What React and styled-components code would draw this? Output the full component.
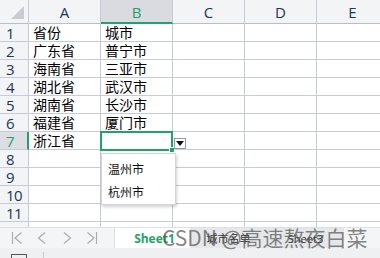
import React from 'react';
import styled, { createGlobalStyle, css } from 'styled-components';

const cols = ['A', 'B', 'C', 'D', 'E'];
const rows = [
  ['省份', '城市'],
  ['广东省', '普宁市'],
  ['海南省', '三亚市'],
  ['湖北省', '武汉市'],
  ['湖南省', '长沙市'],
  ['福建省', '厦门市'],
  ['浙江省', ''],
  ['', ''],
  ['', ''],
  ['', ''],
  ['', ''],
  ['', ''],
];

const GREEN = '#21a366';
const GRID = '#c5cbdc';

const GlobalStyle = createGlobalStyle`
  html, body {
    margin: 0;
    padding: 0;
    background: #fff;
    overflow: hidden;
  }
  body {
    font-family: "Noto Sans CJK SC", "Noto Sans", sans-serif;
  }
`;

const App = () => (
  <>
    <GlobalStyle />
    <Window>
      <SheetArea>
        <Grid>
          <Corner>
            <CornerMark />
          </Corner>
          {cols.map((c) => (
            <ColHead key={c} active={c === 'B'}>
              {c}
            </ColHead>
          ))}
          {rows.map((r, i) => (
            <React.Fragment key={i}>
              <RowHead active={i === 6}>{i + 1}</RowHead>
              {cols.map((c, j) => (
                <Cell key={c}>{r[j] ? <CellText>{r[j]}</CellText> : null}</Cell>
              ))}
            </React.Fragment>
          ))}
        </Grid>
        <Selection>
          <Handle />
        </Selection>
        <DropButton>
          <svg width="8" height="5" viewBox="0 0 8 5">
            <path d="M0 0h8L4 5z" fill="#111" />
          </svg>
        </DropButton>
        <DropList>
          <DropItem>温州市</DropItem>
          <DropItem>杭州市</DropItem>
        </DropList>
      </SheetArea>
      <TabBar>
        <Nav>
          <NavIcon viewBox="0 0 12 14">
            <path d="M1.5 1v12M10.5 1.5L4 7l6.5 5.5" />
          </NavIcon>
          <NavIcon viewBox="0 0 12 14">
            <path d="M9 1.5L2.5 7 9 12.5" />
          </NavIcon>
          <NavIcon viewBox="0 0 12 14">
            <path d="M3 1.5L9.5 7 3 12.5" />
          </NavIcon>
          <NavIcon viewBox="0 0 12 14">
            <path d="M1.5 1.5L8 7l-6.5 5.5M10.5 1v12" />
          </NavIcon>
        </Nav>
        <Tab active>Sheet1</Tab>
        <OtherTabs>
          <Tab>城市名单</Tab>
          <Tab>Sheet3</Tab>
        </OtherTabs>
      </TabBar>
      <StatusBar>
        <StatusIcon />
        <StatusSep />
      </StatusBar>
      <Watermark>CSDN @高速熬夜白菜</Watermark>
    </Window>
  </>
);

const Window = styled.div`
  position: relative;
  width: 380px;
  height: 258px;
  overflow: hidden;
  background: #fff;
`;

const SheetArea = styled.div`
  position: relative;
  height: 227px;
  overflow: hidden;
`;

const Grid = styled.div`
  display: grid;
  grid-template-columns: 29px repeat(5, 72px);
  grid-template-rows: 24px;
  grid-auto-rows: 18px;
`;

const headBase = css`
  box-sizing: border-box;
  display: flex;
  align-items: center;
  justify-content: center;
  font-family: "Open Sans", "Liberation Sans", sans-serif;
  font-size: 15px;
  background: #f3f4f6;
`;

const Corner = styled.div`
  ${headBase};
  position: relative;
  border-right: 1px solid ${GRID};
  border-bottom: 1px solid #b6bdcf;
`;

const CornerMark = styled.div`
  position: absolute;
  right: 4px;
  bottom: 4px;
  width: 0;
  height: 0;
  border-left: 13px solid transparent;
  border-bottom: 13px solid #c9cbd0;
`;

const ColHead = styled.div`
  ${headBase};
  padding-top: 1px;
  color: ${(p) => (p.active ? GREEN : '#1d3557')};
  background: ${(p) => (p.active ? '#d9dbe1' : '#f3f4f6')};
  border-right: 1px solid ${GRID};
  border-bottom: ${(p) => (p.active ? `2px solid ${GREEN}` : '1px solid #b6bdcf')};
`;

const RowHead = styled.div`
  ${headBase};
  color: ${(p) => (p.active ? GREEN : '#1d3557')};
  background: ${(p) => (p.active ? '#dcdee3' : '#f3f4f6')};
  border-right: ${(p) => (p.active ? `2px solid ${GREEN}` : `1px solid ${GRID}`)};
  border-bottom: 1px solid ${GRID};
  justify-content: flex-start;
  padding-left: 6px;
  letter-spacing: -0.5px;
`;

const Cell = styled.div`
  box-sizing: border-box;
  display: flex;
  align-items: center;
  border-right: 1px solid ${GRID};
  border-bottom: 1px solid ${GRID};
  padding-left: 4px;
`;

const CellText = styled.span`
  font-size: 14px;
  line-height: 17px;
  color: #000;
  white-space: nowrap;
`;

const Selection = styled.div`
  position: absolute;
  left: 100px;
  top: 131px;
  width: 73px;
  height: 20px;
  box-sizing: border-box;
  border: 2px solid ${GREEN};
`;

const Handle = styled.div`
  position: absolute;
  right: -4px;
  bottom: -4px;
  width: 4px;
  height: 4px;
  background: ${GREEN};
  border: 1px solid #fff;
`;

const DropButton = styled.div`
  position: absolute;
  left: 174px;
  top: 138px;
  width: 12px;
  height: 11px;
  box-sizing: border-box;
  border: 1px solid #8a9bb6;
  background: #fff;
  display: flex;
  align-items: center;
  justify-content: center;
`;

const DropList = styled.div`
  position: absolute;
  left: 101px;
  top: 153px;
  width: 75px;
  height: 52px;
  box-sizing: border-box;
  background: #fff;
  border: 1px solid #d4d6da;
  box-shadow: 1px 2px 3px rgba(0, 0, 0, 0.18);
  padding: 6px 0 0 6px;
  display: flex;
  flex-direction: column;
  gap: 5px;
`;

const DropItem = styled.div`
  font-size: 12px;
  line-height: 18px;
  color: #111;
`;

const TabBar = styled.div`
  height: 21px;
  display: flex;
  align-items: stretch;
  background: #f4f5f7;
  border-top: 1px solid #dcdfe6;
  box-sizing: border-box;
`;

const Nav = styled.div`
  width: 115px;
  display: flex;
  align-items: center;
  gap: 13px;
  padding-left: 11px;
  box-sizing: border-box;
  border-right: 1px solid #dcdfe6;
`;

const NavIcon = styled.svg`
  width: 12px;
  height: 14px;
  fill: none;
  stroke: #a9acb3;
  stroke-width: 1.2;
`;

const OtherTabs = styled.div`
  display: flex;
  background: #e6e7ea;
  width: 154px;
`;

const Tab = styled.div`
  display: flex;
  align-items: center;
  justify-content: center;
  width: ${(p) => (p.active ? '71px' : '77px')};
  padding-left: ${(p) => (p.active ? '4px' : '0')};
  background: ${(p) => (p.active ? '#fff' : 'transparent')};
  color: ${(p) => (p.active ? GREEN : '#333')};
  font-family: "Open Sans", "Noto Sans CJK SC", sans-serif;
  font-weight: ${(p) => (p.active ? 700 : 400)};
  font-size: ${(p) => (p.active ? '12px' : '11px')};
`;

const StatusBar = styled.div`
  height: 10px;
  background: #eff0f2;
  position: relative;
  display: flex;
  align-items: flex-end;
  padding-left: 11px;
  gap: 16px;
`;

const StatusIcon = styled.div`
  width: 14px;
  height: 3px;
  border: 1px solid #555;
  border-bottom: none;
`;

const StatusSep = styled.div`
  width: 1px;
  height: 6px;
  background: #c8cad0;
`;

const Watermark = styled.div`
  position: absolute;
  left: 162px;
  top: 224px;
  font-size: 21px;
  line-height: 26px;
  color: rgba(80, 80, 80, 0.7);
  font-family: "Noto Sans CJK SC", "Liberation Sans", sans-serif;
  white-space: nowrap;
  pointer-events: none;
`;

export default App;
